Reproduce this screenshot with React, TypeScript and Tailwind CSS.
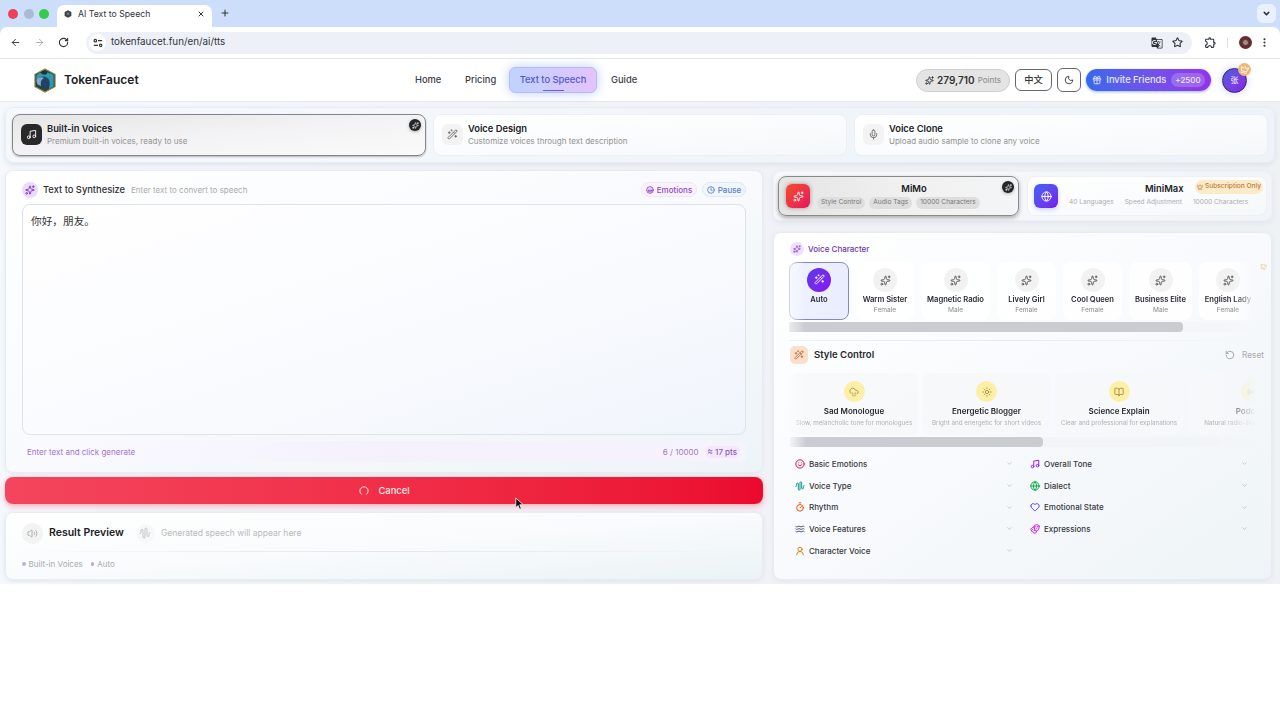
import type { ReactNode } from 'react';
import {
  ArrowLeft,
  ArrowRight,
  AudioWaveform,
  BookOpen,
  ChevronDown,
  Clock,
  CloudDrizzle,
  Crown,
  Drama,
  EllipsisVertical,
  Gift,
  Globe,
  Heart,
  Laugh,
  Mic,
  Moon,
  Music,
  Plus,
  Radio,
  RotateCcw,
  RotateCw,
  Smile,
  Sparkles,
  Star,
  Sun,
  Timer,
  UserRound,
  Volume2,
  WandSparkles,
  Waves,
  X,
} from 'lucide-react';
import { MdGTranslate, MdOutlineExtension } from 'react-icons/md';

const modes = [
  { title: 'Built-in Voices', text: 'Premium built-in voices, ready to use', icon: Music, active: true },
  { title: 'Voice Design', text: 'Customize voices through text description', icon: WandSparkles, active: false },
  { title: 'Voice Clone', text: 'Upload audio sample to clone any voice', icon: Mic, active: false },
];

const voices = [
  { name: 'Warm Sister', gender: 'Female', width: 'w-[58px]' },
  { name: 'Magnetic Radio', gender: 'Male', width: 'w-[69px]' },
  { name: 'Lively Girl', gender: 'Female', width: 'w-[59px]' },
  { name: 'Cool Queen', gender: 'Female', width: 'w-[59px]' },
  { name: 'Business Elite', gender: 'Male', width: 'w-[63px]' },
  { name: 'English Lady', gender: 'Female', width: 'w-[58px]' },
];

const styles = [
  { name: 'Sad Monologue', text: 'Slow, melancholic tone for monologues', icon: CloudDrizzle },
  { name: 'Energetic Blogger', text: 'Bright and energetic for short videos', icon: Sun },
  { name: 'Science Explain', text: 'Clear and professional for explanations', icon: BookOpen },
  { name: 'Podcast', text: 'Natural radio-like vocal delivery', icon: Radio },
];

const leftGroups = [
  { name: 'Basic Emotions', icon: Smile, color: 'text-rose-600' },
  { name: 'Voice Type', icon: AudioWaveform, color: 'text-teal-600' },
  { name: 'Rhythm', icon: Timer, color: 'text-orange-600' },
  { name: 'Voice Features', icon: Waves, color: 'text-slate-600' },
  { name: 'Character Voice', icon: UserRound, color: 'text-yellow-600' },
];

const rightGroups = [
  { name: 'Overall Tone', icon: Music, color: 'text-purple-600' },
  { name: 'Dialect', icon: Globe, color: 'text-green-600' },
  { name: 'Emotional State', icon: Heart, color: 'text-indigo-600' },
  { name: 'Expressions', icon: Drama, color: 'text-fuchsia-600' },
];

function BrowserBar() {
  return (
    <div className="text-[#30343a]">
      <div className="flex h-[27px] items-end bg-[#cddefa]">
        <div className="flex h-[27px] w-[49px] items-center gap-[5.5px] pl-[8px]">
          <i className="size-[10px] rounded-full bg-[#ed4059]" />
          <i className="size-[10px] rounded-full bg-[#a9bad4]" />
          <i className="size-[10px] rounded-full bg-[#35cc4b]" />
        </div>
        <div className="ml-2 flex h-[22px] w-[155px] items-center rounded-t-[7px] bg-white pl-[7px] pr-[7px] pb-[4px]">
          <svg viewBox="0 0 10 10" className="size-[8px]">
            <path d="M5 .3 9.2 2.4v5L5 9.7.8 7.4v-5z" fill="#3e4347" />
            <path d="M3 3.3 6.5 2.7 7 5.8 4 7z" fill="#6c7579" />
          </svg>
          <span className="ml-[6px] text-[8.7px] leading-none">AI Text to Speech</span>
          <X className="ml-auto size-[8px]" strokeWidth={3} />
        </div>
        <Plus className="mb-[9px] ml-[8px] size-[10px]" strokeWidth={2.5} />
        <div className="mr-[4px] mb-[4px] ml-auto flex size-[19px] items-center justify-center rounded-[6px] bg-[#e9f1fe]">
          <ChevronDown className="size-[9px]" strokeWidth={4} />
        </div>
      </div>
      <div className="bg-[#cddefa]">
        <div className="flex h-[32px] items-center rounded-t-[7px] border-b border-[#e4e7ea] bg-white pr-[10px] pl-[10px]">
          <ArrowLeft className="size-[11px]" />
          <ArrowRight className="ml-[13px] size-[11px] text-[#a5a8ad]" />
          <RotateCw className="ml-[13px] size-[11px]" strokeWidth={2.4} />
          <div className="ml-[17px] flex h-[22px] w-[1106px] items-center rounded-full bg-[#edf1f7] pr-[9px] pl-[3px]">
            <span className="flex size-[17px] items-center justify-center rounded-full bg-white">
              <svg viewBox="0 0 12 12" className="size-[10px]" fill="none" stroke="currentColor" strokeWidth="1.4">
                <circle cx="2.8" cy="3.2" r="1.5" />
                <path d="M6 3.2h5M1 8.8h5" />
                <circle cx="9.2" cy="8.8" r="1.5" />
              </svg>
            </span>
            <span className="ml-[5px] text-[9.8px]">tokenfaucet.fun/en/ai/tts</span>
            <MdGTranslate className="ml-auto size-[12px]" />
            <Star className="ml-[9px] size-[11px]" strokeWidth={2.4} />
          </div>
          <MdOutlineExtension className="ml-[12px] size-[13px]" />
          <i className="ml-[10px] h-[10px] w-px bg-[#d3deee]" />
          <span className="ml-[11px] flex size-[13px] items-center justify-center rounded-full bg-[#662b2e]">
            <i className="size-[7px] rounded-full border border-[#4e3b39] bg-[#ab8980]" />
          </span>
          <EllipsisVertical className="ml-auto size-[11px]" strokeWidth={2.6} />
        </div>
      </div>
    </div>
  );
}

function Header() {
  return (
    <header className="flex h-[43px] items-center border-b border-[#e6e8ec] bg-white text-[#3b3d43]">
      <div className="flex w-[398px] items-center pl-[33px]">
        <svg viewBox="0 0 24 26" className="h-[25px] w-[24px]">
          <path d="m12 1 10.5 5.5v13L12 25 1.5 19.5v-13z" fill="#25434d" stroke="#9a8b3f" strokeWidth="1.1" />
          <path d="M3 8c4-5 9-5 18-1v12l-5 3c2-7 1-11-4-13-4-1-7 1-9 4z" fill="#3099b2" />
          <path d="M3 13c2-4 6-4 9-2-4 0-5 4-4 8l-4-2z" fill="#80a9cc" />
          <circle cx="12.5" cy="14.5" r="4" fill="#234269" />
          <path d="M7 5c4-3 8-1 7 1-2 2-4 1-7-1z" fill="#1d352e" />
        </svg>
        <span className="ml-[7px] text-[12px] font-semibold text-[#202124]">TokenFaucet</span>
      </div>
      <nav className="flex items-center text-[9.33px] font-medium">
        <span className="w-[67px] pl-[17px]">Home</span>
        <span className="w-[44px]">Pricing</span>
        <span className="relative flex h-[26px] w-[88px] items-center justify-center rounded-[6px] border border-[#bdb9ed] bg-gradient-to-r from-[#bfd3fc] to-[#e3c3fc] text-[#4c57d3] shadow-[0_0_12px_#b9d2ff]">
          Text to Speech
          <i className="absolute bottom-px left-[33px] h-[1.5px] w-[21px] rounded-full bg-gradient-to-r from-[#416ee9] to-[#8c3bea]" />
        </span>
        <span className="ml-[14px]">Guide</span>
      </nav>
      <div className="ml-auto flex items-center pr-[33px]">
        <div className="flex h-[23px] w-[94px] items-center justify-center rounded-full border border-[#cecece] bg-[#e4e4e4] text-[#333]">
          <Sparkles className="size-[9px]" strokeWidth={2.4} />
          <span className="ml-[3px] text-[10px] font-semibold">279,710</span>
          <span className="ml-[3px] text-[8px] text-[#888]">Points</span>
        </div>
        <div className="ml-[5px] flex h-[22px] w-[37px] items-center justify-center rounded-[6px] border border-[#66676c] text-[9.3px] font-medium text-[#333]">中文</div>
        <div className="ml-[5px] flex h-[24px] w-[24px] items-center justify-center rounded-[6px] border border-[#66676c]">
          <Moon className="size-[10px]" strokeWidth={2.3} />
        </div>
        <div className="ml-[5px] flex h-[22px] w-[125px] items-center justify-center rounded-full bg-gradient-to-r from-[#3568ec] to-[#9133eb] text-[9.33px] font-medium text-[#e8eaff] shadow-[0_1px_3px_#9ab6ff]">
          <Gift className="size-[10px]" />
          <span className="ml-[4px]">Invite Friends</span>
          <span className="ml-[5px] rounded-full bg-white/20 px-[4px] py-px text-[8px]">+2500</span>
        </div>
        <div className="relative ml-[11px] flex size-[25px] items-center justify-center rounded-full border-[1.5px] border-[#2b2867] bg-gradient-to-br from-[#4b5bdf] to-[#8c16e9] text-[8px] text-white shadow-[0_0_8px_#d2cfff]">
          张
          <span className="absolute -top-[6px] -right-[5px] flex size-[13px] items-center justify-center rounded-full bg-[#efb777] text-white">
            <Crown className="size-[9px] rotate-12" />
          </span>
        </div>
      </div>
    </header>
  );
}

function ModeBar() {
  return (
    <div className="flex h-[56px] gap-[7px] rounded-[8px] border border-[#e8edf4] bg-gradient-to-r from-[#f6f8fd] to-[#edf3f8] px-[6px] py-[6px] shadow-[0_2px_5px_#dfe2e9]">
      {modes.map(({ title, text, icon: Icon, active }) => (
        <div
          key={title}
          className={
            active
              ? 'relative flex flex-1 items-center rounded-[8px] border-[1.5px] border-[#85868b] bg-gradient-to-br from-[#e6e6e6] via-[#f3f3f5] to-[#fafafa] px-[8px] shadow-[0_1px_2px_#8889]'
              : 'relative flex flex-1 items-center rounded-[8px] border border-[#eceff3] bg-gradient-to-br from-white to-[#f5f8fa] px-[8px]'
          }
        >
          <div
            className={
              active
                ? 'flex size-[21px] -translate-y-px items-center justify-center rounded-[6px] bg-[#292929] text-white'
                : 'flex size-[21px] -translate-y-px items-center justify-center rounded-[6px] bg-[#f3f3f3] text-[#666]'
            }
          >
            <Icon className="size-[11px]" />
          </div>
          <div className="ml-[5px] leading-[12px]">
            <p className="text-[9.33px] font-semibold text-[#202124]">{title}</p>
            <p className="text-[8px] text-[#929292]">{text}</p>
          </div>
          {active && <ActiveMark />}
        </div>
      ))}
    </div>
  );
}

function ActiveMark() {
  return (
    <span className="absolute top-[4px] right-[4px] flex size-[12px] items-center justify-center rounded-full bg-[#242528] text-white shadow-[0_1px_3px_#aaa]">
      <Sparkles className="size-[7px]" />
    </span>
  );
}

function Editor() {
  return (
    <section className="h-[303px] rounded-[8px] border border-[#e9ebf3] bg-gradient-to-br from-white via-[#f8fafd] to-[#edf4f7] px-[16px] pt-[10px] shadow-[0_1px_5px_#e7e9f0]">
      <div className="flex h-[17px] items-center">
        <span className="flex size-[16px] items-center justify-center rounded-full bg-[#eadbfb] text-[#8139c9]">
          <Sparkles className="size-[10px]" strokeWidth={2.3} />
        </span>
        <h2 className="ml-[5px] text-[9.33px] font-medium text-[#2d2e33]">Text to Synthesize</h2>
        <span className="ml-[6px] text-[8px] text-[#aaa]">Enter text to convert to speech</span>
        <span className="ml-auto flex h-[15px] w-[56px] items-center justify-center gap-[3px] rounded-full border border-[#f0e4fb] bg-[#faf2fe] text-[8px] font-medium text-[#8e49bd]">
          <Laugh className="size-[8px]" strokeWidth={2.8} />
          Emotions
        </span>
        <span className="ml-[5px] flex h-[15px] w-[44px] items-center justify-center gap-[3px] rounded-full border border-[#dce9fb] bg-[#eff6fe] text-[8px] font-medium text-[#5c7cc5]">
          <Clock className="size-[8px]" strokeWidth={2.5} />
          Pause
        </span>
      </div>
      <div className="mt-[6px] h-[231px] rounded-[8px] border border-[#e0e2e9] bg-gradient-to-br from-white via-[#fafbfe] to-[#f0f5fc] px-[8px] pt-[9px] text-[10.67px] leading-[15px] text-[#333]">
        你好，朋友。
      </div>
      <div className="mt-[6px] flex h-[21px] items-center rounded-[6px] bg-gradient-to-r from-[#fbfaff] via-[#f4f1fd] to-[#f6f3fd] px-[5px] text-[8px] text-[#a174cf]">
        <span>Enter text and click generate</span>
        <span className="ml-auto text-[#a17bc4]">6 / 10000</span>
        <span className="mr-[1px] ml-[6px] rounded-full bg-[#f2e9fd] px-[3px] font-medium text-[#9055bd]">≈ 17 pts</span>
      </div>
    </section>
  );
}

function ResultPreview() {
  return (
    <section className="mt-[8px] h-[68px] rounded-[8px] border border-[#e8edf1] bg-gradient-to-br from-white via-[#f9fbfc] to-[#ebf3f6] px-[16px] pt-[9px] shadow-[0_1px_5px_#dce3e8]">
      <div className="flex h-[22px] items-center">
        <span className="flex size-[21px] items-center justify-center rounded-full bg-[#f3f3f3] text-[#aaa]">
          <Volume2 className="size-[11px]" />
        </span>
        <h2 className="ml-[6px] text-[10.5px] font-semibold text-[#202124]">Result Preview</h2>
        <span className="ml-[12px] flex size-[19px] items-center justify-center rounded-full bg-[#f8f8f8] text-[#c5c5c9]">
          <AudioWaveform className="size-[12px]" />
        </span>
        <span className="ml-[6px] text-[8.5px] text-[#b8b9ba]">Generated speech will appear here</span>
      </div>
      <div className="mt-[7px] h-px bg-gradient-to-r from-transparent via-[#e1e7eb] to-transparent" />
      <div className="mt-[6px] flex items-center text-[8px] leading-[12px] text-[#a8abad]">
        <i className="size-[3.5px] rounded-full bg-[#bbb3cb]" />
        <span className="ml-[3px]">Built-in Voices</span>
        <i className="ml-[8px] size-[3.5px] rounded-full bg-[#c1a8d0]" />
        <span className="ml-[3px]">Auto</span>
      </div>
    </section>
  );
}

function Tag({ children }: { children: ReactNode }) {
  return <span className="flex h-[12px] items-center rounded-full bg-[#dedede] px-[4px] text-[6.6px] text-[#777]">{children}</span>;
}

function Models() {
  return (
    <div className="flex h-[50px] gap-[8px] rounded-[8px] border border-[#eff1f6] bg-gradient-to-r from-[#f8f9fc] to-[#f1f5f9] px-[4px] py-[4px] shadow-[0_2px_6px_#e1e4eb]">
      <div className="relative flex w-[241px] items-center rounded-[8px] border-[1.5px] border-[#8a8a8b] bg-gradient-to-r from-[#e4e4e4] via-[#f0f0f0] to-[#f4f5f6] shadow-[0_2px_4px_#aaa]">
        <span className="ml-[7px] flex size-[24px] items-center justify-center rounded-[6px] bg-gradient-to-br from-[#f24b1f] to-[#e7075e] text-white shadow-[0_0_4px_#a88]">
          <Sparkles className="size-[11px]" />
        </span>
        <div className="ml-[7px] w-[194px]">
          <p className="mb-[3px] text-center text-[9.33px] leading-[11px] font-semibold text-[#202124]">MiMo</p>
          <div className="flex gap-[4px]">
            <Tag>Style Control</Tag>
            <Tag>Audio Tags</Tag>
            <Tag>10000 Characters</Tag>
          </div>
        </div>
        <ActiveMark />
      </div>
      <div className="relative flex flex-1 items-center rounded-[8px] border border-[#edf0f4] bg-gradient-to-br from-white to-[#f5f8fa]">
        <span className="ml-[6px] flex size-[24px] items-center justify-center rounded-[6px] bg-gradient-to-br from-[#3d62f2] to-[#7612ec] text-white shadow-[0_2px_5px_#ccd4ff]">
          <Globe className="size-[11px]" />
        </span>
        <div className="ml-[11px] flex-1">
          <p className="mb-[3px] pl-[76px] text-[9.33px] leading-[11px] font-semibold text-[#202124]">MiniMax</p>
          <div className="flex h-[12px] items-center gap-[11px] text-[6.6px] whitespace-nowrap text-[#aaaeb2]">
            <span>40 Languages</span>
            <span>Speed Adjustment</span>
            <span>10000 Characters</span>
          </div>
        </div>
        <span className="absolute top-[3px] right-[3px] flex h-[14px] w-[68px] items-center justify-center gap-[2px] rounded-full bg-[#fcebca] text-[6.6px] font-medium whitespace-nowrap text-[#bd7b37]">
          <Crown className="size-[6px]" strokeWidth={2.5} />
          Subscription Only
        </span>
      </div>
    </div>
  );
}

function VoicePicker() {
  return (
    <>
      <div className="flex h-[14px] items-center text-[#6d36aa]">
        <span className="flex size-[14px] items-center justify-center rounded-full bg-[#efe1fc] text-[#8240c8]">
          <Sparkles className="size-[8px]" />
        </span>
        <h3 className="ml-[4px] text-[8px] font-medium">Voice Character</h3>
      </div>
      <div className="relative mt-[6px] -ml-px">
        <div className="w-[466px] overflow-hidden [mask-image:linear-gradient(to_right,rgba(0,0,0,.35),#000_16px,#000_445px,transparent)]">
          <div className="flex h-[58px] gap-[7px] text-center">
            <div className="flex w-[60px] shrink-0 flex-col items-center rounded-[8px] border-[1.5px] border-[#8486cc] bg-gradient-to-r from-[#eef1ff] to-[#e9eeff] pt-[4.5px]">
              <span className="flex size-[24px] items-center justify-center rounded-full bg-gradient-to-br from-[#5a38ef] to-[#8b0df0] text-white">
                <WandSparkles className="size-[11px]" />
              </span>
              <p className="mt-[3px] text-[7.6px] leading-[10px] font-semibold text-[#292a30]">Auto</p>
            </div>
            {voices.map((voice) => (
              <div key={voice.name} className={`flex shrink-0 flex-col items-center rounded-[8px] bg-white/80 pt-[6px] ${voice.width}`}>
                <span className="flex size-[24px] items-center justify-center rounded-full bg-[#f2f2f3] text-[#555]">
                  <Sparkles className="size-[11px]" />
                </span>
                <p className="mt-[3px] text-[7.6px] leading-[10px] font-semibold whitespace-nowrap text-[#292a30]">{voice.name}</p>
                <p className="text-[6.6px] leading-[10px] text-[#888]">{voice.gender}</p>
              </div>
            ))}
          </div>
          <div className="mt-[2px] h-[10px] bg-[#f4f6f9]">
            <div className="h-full w-[394px] rounded-r-[4px] bg-[#c9cdd2]" />
          </div>
        </div>
        <Crown className="absolute top-[1px] right-[4px] size-[7px] rotate-12 text-[#edc583]" />
      </div>
    </>
  );
}

function StyleControl() {
  return (
    <>
      <div className="flex h-[18px] items-center">
        <span className="flex size-[18px] items-center justify-center rounded-[5px] bg-[#fbdfca] text-[#c07545]">
          <WandSparkles className="size-[10px]" strokeWidth={2.3} />
        </span>
        <h3 className="ml-[6px] text-[9.6px] font-semibold text-[#292a2e]">Style Control</h3>
        <RotateCcw className="ml-auto size-[10px] text-[#999]" />
        <span className="mr-[7px] ml-[7px] text-[8.3px] text-[#aaa]">Reset</span>
      </div>
      <div className="mt-[9px] w-[466px] overflow-hidden [mask-image:linear-gradient(to_right,rgba(0,0,0,.15),#000_16px,#000_430px,transparent)]">
        <div className="flex h-[62px] gap-[4.5px]">
          {styles.map(({ name, text, icon: Icon }) => (
            <div key={name} className="flex w-[128px] shrink-0 flex-col items-center rounded-[8px] bg-[#f6f7f9]/80 pt-[8px]">
              <span className="flex size-[21px] items-center justify-center rounded-full bg-[#fcf0a9] text-[#aa842c]">
                <Icon className="size-[10px]" />
              </span>
              <p className="mt-[4px] text-[8px] leading-[10px] font-semibold text-[#292a2e]">{name}</p>
              <p className="mt-[3px] text-[6.3px] leading-[9px] whitespace-nowrap text-[#afb1b5]">{text}</p>
            </div>
          ))}
        </div>
        <div className="mt-[2px] h-[10px] bg-[#f2f5f8]">
          <div className="h-full w-[253px] rounded-r-[4px] bg-[#c9cdd2]" />
        </div>
      </div>
    </>
  );
}

function GroupList({ items }: { items: typeof leftGroups }) {
  return (
    <div className="w-[230px]">
      {items.map(({ name, icon: Icon, color }) => (
        <div key={name} className="flex h-[21.7px] items-center pr-[7px] pl-[5px] text-[8px] font-medium text-[#37383d]">
          <Icon className={`size-[10px] ${color}`} strokeWidth={2.3} />
          <span className="ml-[4px]">{name}</span>
          <ChevronDown className="ml-auto size-[7px] text-[#aaa]" />
        </div>
      ))}
    </div>
  );
}

export default function App() {
  return (
    <div className="relative h-[720px] w-[1280px] overflow-hidden bg-white font-[Inter,'Noto_Sans_CJK_SC',sans-serif]">
      <BrowserBar />
      <Header />
      <main className="h-[482px] bg-gradient-to-r from-[#f5f9fe] via-[#f2f2f8] to-[#eef2f5] px-[5px] pt-[5px]">
        <ModeBar />
        <div className="flex justify-between pt-[7px] pr-[3px]">
          <div className="w-[758px]">
            <Editor />
            <button className="mt-[4px] flex h-[27px] w-full items-center justify-center rounded-[8px] bg-gradient-to-r from-[#f3455d] via-[#f12e48] to-[#eb092e] pr-[0px] text-[9.33px] font-medium text-white/90 shadow-[0_2px_6px_#f8a7b2]">
              <svg viewBox="0 0 12 12" className="mr-[10px] size-[10px]" fill="none" stroke="currentColor" strokeWidth="1.2" strokeLinecap="round">
                <path d="M3 10A5 5 0 1 1 9 10" />
              </svg>
              Cancel
            </button>
            <ResultPreview />
          </div>
          <div className="w-[499px] pt-px">
            <Models />
            <section className="mt-[11px] h-[348px] rounded-[8px] border border-[#e8ebf1] bg-gradient-to-br from-white via-[#f8fafd] to-[#eef4f7] pt-[9px] pl-[16px] shadow-[0_1px_5px_#e1e5eb]">
              <VoicePicker />
              <div className="mt-[8px] mr-[17px] h-px bg-gradient-to-r from-[#edf0f4] via-[#e6eaf0] to-transparent" />
              <div className="mt-[5px]">
                <StyleControl />
              </div>
              <div className="mt-[6px] flex gap-[5px]">
                <GroupList items={leftGroups} />
                <GroupList items={rightGroups} />
              </div>
            </section>
          </div>
        </div>
      </main>
      <svg viewBox="0 0 12 18" className="absolute top-[497px] left-[515px] h-[14px] w-[9px]">
        <path d="M1 1v13l3-3 2.2 5 2.3-1-2.2-5H11z" fill="#111" stroke="#fff" strokeWidth="1" />
      </svg>
    </div>
  );
}
